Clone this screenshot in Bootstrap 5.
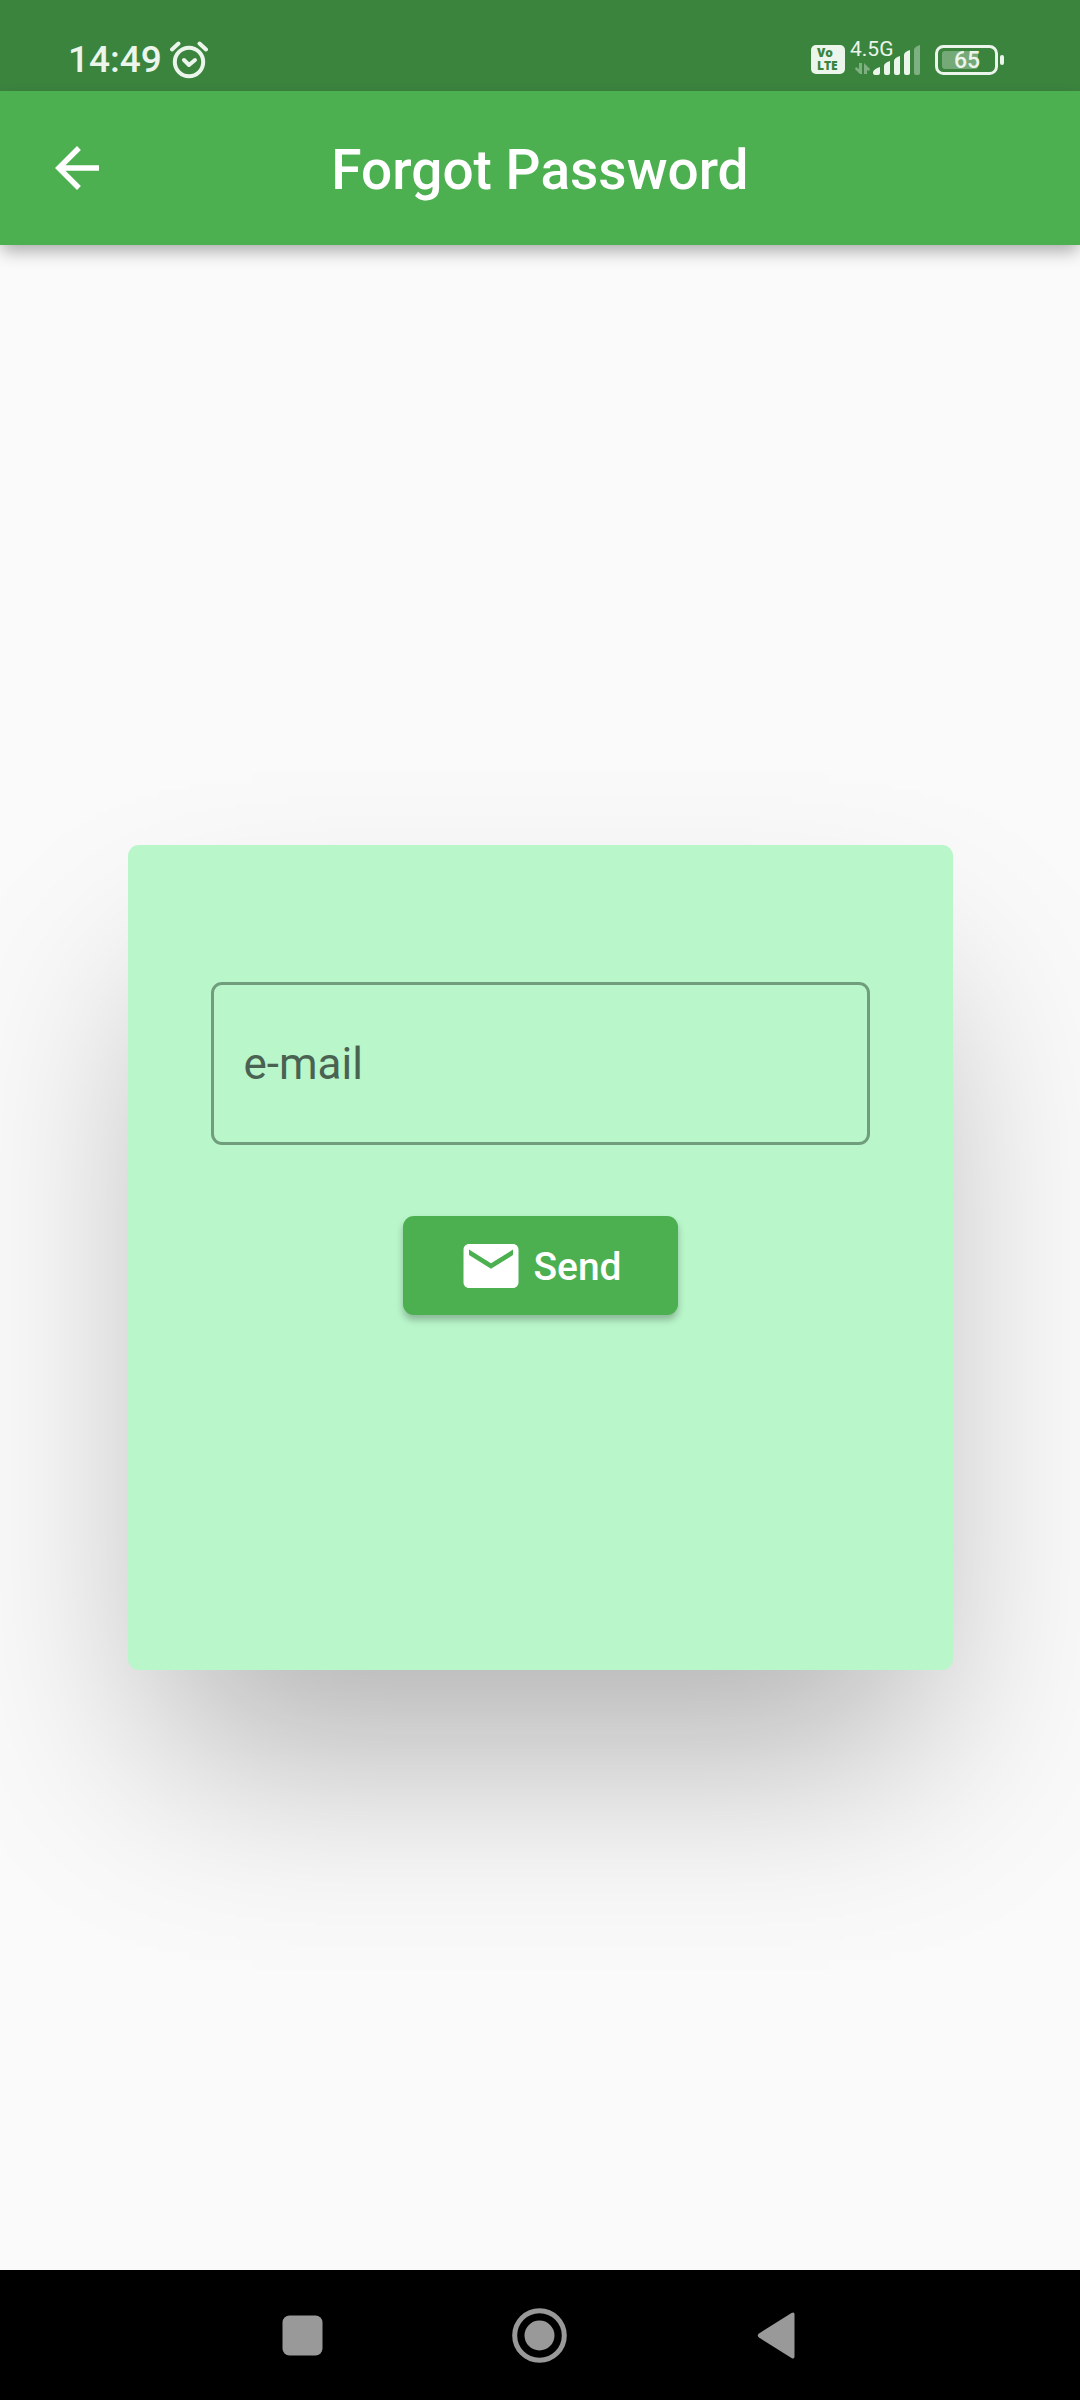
<!DOCTYPE html>
<html lang="en">
<head>
<meta charset="utf-8">
<meta name="viewport" content="width=device-width, initial-scale=1">
<title>Forgot Password</title>
<link href="https://cdn.jsdelivr.net/npm/bootstrap@5.3.0/dist/css/bootstrap.min.css" rel="stylesheet">
<style>
  body { font-family: Roboto, "Noto Sans", sans-serif; background: #fafafa; }
  .status-bar { height: 91px; padding: 28px 75px 0 68px; background: #3b843e; color: #ebf5eb; }
  .clock { font-size: 37px; line-height: 44px; font-weight: 500; }
  .volte { width: 34px; height: 29px; border-radius: 5px; background: #ebf5eb; color: #3b843e;
           font: 800 12px/13px "Open Sans", sans-serif; padding: 1px 0 0 6px; margin-right: 5px; }
  .network { width: 72px; height: 50px; margin-right: 13px; }
  .app-bar { height: 154px; padding: 0 44px; background: #4caf50; box-shadow: 0 8px 16px -2px rgba(0,0,0,.32); }
  .app-bar h1 { font-size: 55px; line-height: 64px; font-weight: 500; padding-top: 4px; }
  .app-icon { width: 66px; height: 66px; }
  .reset-card { width: 825px; max-width: 90%; aspect-ratio: 1; border-radius: 11px; background: #b9f6ca;
                padding: 137px 83px; box-shadow: 0 114px 190px -30px rgba(0,0,0,.29); }
  .mail-field, .mail-field:focus { height: 163px; padding: 0 30px; border: 3px solid #709e7c; border-radius: 11px;
                background: transparent; font-size: 44px; color: #222; box-shadow: none; }
  .mail-field::placeholder { color: #4a6251; opacity: 1; }
  .send-btn, .send-btn:hover { width: 275px; height: 99px; gap: 9px; margin-top: 71px; border-radius: 11px; background: #4caf50; color: #fff;
              font-size: 39px; line-height: 46px; font-weight: 500; box-shadow: 0 5px 7px rgba(0,0,0,.25); }
  .send-btn span { padding-top: 2px; }
  .system-nav { height: 130px; gap: 182px; padding-right: 2px; background: #000; }
  .system-nav svg { width: 55px; height: 55px; fill: #999; }
</style>
</head>
<body class="min-vh-100 d-flex flex-column">

<div class="status-bar d-flex align-items-center">
  <span class="clock">14:49</span>
  <svg class="ms-2" width="40" height="40" viewBox="0 0 40 40" fill="none" stroke="#ebf5eb" stroke-width="4" stroke-linecap="round" aria-hidden="true">
    <circle cx="19" cy="22" r="14.2"/>
    <path d="M14 20l5 5 6-5" stroke-linejoin="round"/>
    <path d="M2 9.500l6.500-6M36 9.500l-6.500-6"/>
  </svg>
  <div class="ms-auto d-flex align-items-center">
    <div class="volte">Vo<br>LTE</div>
    <svg class="network" viewBox="0 -4 72 50" fill="#ebf5eb" aria-hidden="true">
      <text x="0" y="17" font-size="21">4.5G</text>
      <g fill="#7fb081">
        <path d="M9 24h3v11h-2l-5-5 1-2 3 2zM14 24l6 6-1 2-2-1v4h-3z"/>
        <path d="M64 11q0-3 6-5v28q0 2-2 2h-2q-2 0-2-2z"/>
      </g>
      <path d="M23 33q1-3 7-5v6q0 2-2 2h-3q-2 0-2-2zM34 27q0-3 6-5v12q0 2-2 2h-2q-2 0-2-2zM44 22q0-3 6-5v17q0 2-2 2h-2q-2 0-2-2zM54 16q0-3 6-5v23q0 2-2 2h-2q-2 0-2-2z"/>
    </svg>
    <svg width="70" height="30" viewBox="0 0 70 30" role="img" aria-label="Battery 65">
      <rect x="1.500" y="1.500" width="60" height="27" rx="7" fill="none" stroke="#ebf5eb" stroke-width="3"/>
      <rect x="7" y="6" width="36" height="18" rx="3" fill="#76a978"/>
      <rect x="65" y="10" width="4" height="10" rx="2" fill="#ebf5eb"/>
      <text x="32" y="23" font-size="23" font-weight="500" text-anchor="middle" fill="#ebf5eb">65</text>
    </svg>
  </div>
</div>

<header class="app-bar d-flex align-items-center justify-content-between text-white">
  <a href="#" class="text-white d-flex" aria-label="Back">
    <svg class="app-icon" viewBox="0 0 24 24" fill="currentColor"><path d="M20 11H7.830l5.590-5.590L12 4l-8 8 8 8 1.410-1.410L7.830 13H20v-2z"/></svg>
  </a>
  <h1 class="mb-0">Forgot Password</h1>
  <span class="app-icon"></span>
</header>

<main class="flex-grow-1 d-flex align-items-center justify-content-center overflow-hidden">
  <form class="reset-card d-flex flex-column align-items-center">
    <input type="email" class="form-control mail-field" placeholder="e-mail" aria-label="e-mail">
    <button type="button" class="btn border-0 p-0 send-btn d-flex align-items-center justify-content-center">
      <svg class="app-icon" viewBox="0 0 24 24" fill="currentColor" aria-hidden="true"><path d="M20 4H4c-1.100 0-1.990.9-1.990 2L2 18c0 1.100.9 2 2 2h16c1.100 0 2-.9 2-2V6c0-1.100-.9-2-2-2zm0 4l-8 5-8-5V6l8 5 8-5v2z"/></svg>
      <span>Send</span>
    </button>
  </form>
</main>

<nav class="system-nav d-flex align-items-center justify-content-center">
  <button type="button" class="btn border-0 p-0 d-flex" aria-label="Recent apps">
    <svg viewBox="0 0 55 55"><rect x="7.500" y="7.500" width="40" height="40" rx="7"/></svg>
  </button>
  <button type="button" class="btn border-0 p-0 d-flex" aria-label="Home">
    <svg viewBox="0 0 55 55"><circle cx="27.500" cy="27.500" r="24.800" fill="none" stroke="#999" stroke-width="5"/><circle cx="27.500" cy="27.500" r="15"/></svg>
  </button>
  <button type="button" class="btn border-0 p-0 d-flex" aria-label="Back">
    <svg viewBox="0 0 55 55"><path d="M10 25.500 42.500 5q3-1.500 3 1.500v42q0 3-3 1.500L10 29.500q-2.500-2 0-4z"/></svg>
  </button>
</nav>

<script src="https://cdn.jsdelivr.net/npm/bootstrap@5.3.0/dist/js/bootstrap.bundle.min.js"></script>
</body>
</html>
